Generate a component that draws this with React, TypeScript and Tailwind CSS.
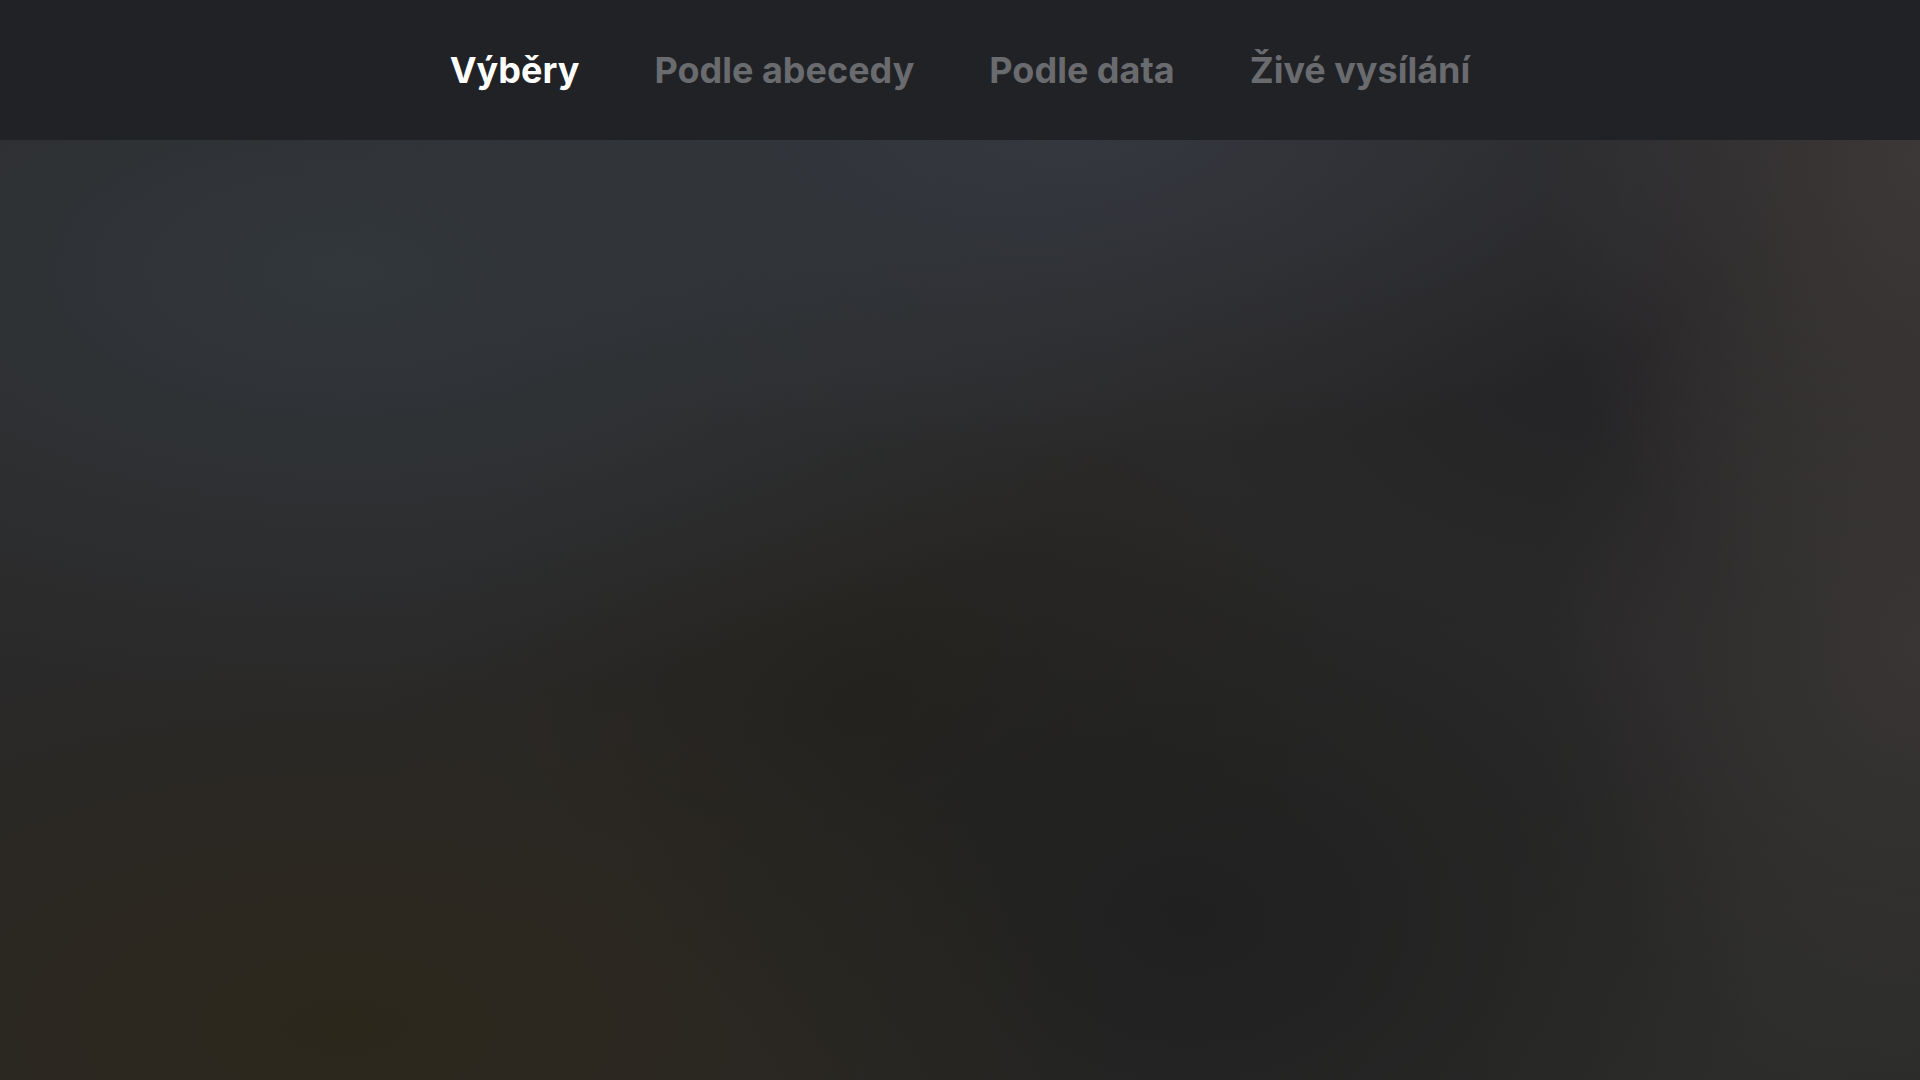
export default function App() {
  const tabs = ['Výběry', 'Podle abecedy', 'Podle data', 'Živé vysílání']
  const active = 0

  return (
    <div className="relative h-[1080px] w-[1920px] overflow-hidden bg-[#2a2929] font-['Inter','Liberation_Sans',sans-serif]">
      {/* rozmazané pozadí */}
      <div className="absolute inset-0 bg-[radial-gradient(ellipse_45%_40%_at_18%_25%,#32373c_0%,transparent_100%),radial-gradient(ellipse_40%_30%_at_55%_12%,#353840_0%,transparent_100%),radial-gradient(ellipse_40%_35%_at_18%_95%,#2c271b_0%,transparent_100%),radial-gradient(ellipse_30%_40%_at_62%_85%,#1f201f_0%,transparent_100%),radial-gradient(ellipse_25%_30%_at_45%_65%,#25231f_0%,transparent_100%),radial-gradient(ellipse_20%_45%_at_100%_15%,#3d3838_0%,transparent_100%),radial-gradient(ellipse_20%_40%_at_100%_60%,#383534_0%,transparent_100%),radial-gradient(ellipse_20%_25%_at_82%_35%,#252426_0%,transparent_100%),radial-gradient(ellipse_25%_25%_at_95%_95%,#2d2e2b_0%,transparent_100%)]" />

      <div className="relative flex h-full flex-col">
        <header className="flex h-[140px] shrink-0 items-center justify-center gap-[75px] bg-[#202226]">
          {tabs.map((t, i) => (
            <span
              key={t}
              className={
                i === active
                  ? 'text-[36px] font-bold text-white'
                  : 'text-[36px] font-bold text-[#6a6b6f]'
              }
            >
              {t}
            </span>
          ))}
        </header>
        <main className="flex-1" />
      </div>
    </div>
  )
}
